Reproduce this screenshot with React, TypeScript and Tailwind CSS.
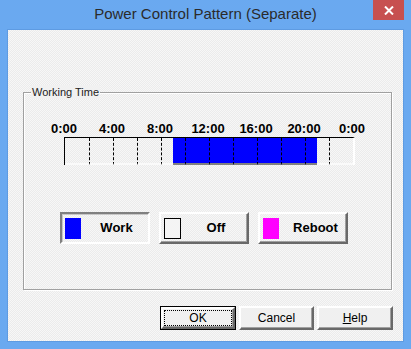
import React from "react";

const hours = Array.from({ length: 24 }, (_, h) => h);
const ticks = ["0:00", "4:00", "8:00", "12:00", "16:00", "20:00", "0:00"];

// working hours 9:00 - 21:00
const isWork = (h: number) => h >= 9 && h < 21;

export default function App() {
  return (
    <div className="relative flex h-[349px] w-[411px] flex-col bg-[#6aa9f0] font-['Liberation_Sans',Arial,sans-serif] text-black">
      {/* TITLE BAR */}
      <div className="flex h-[30px] items-center justify-center pb-[1px] text-[15px] text-[#2b2b2b]">
        Power Control Pattern (Separate)
      </div>
      <div className="absolute right-[7px] top-0 flex h-[20px] w-[31px] items-center justify-center bg-[#c75050]">
        <svg width="10" height="9" viewBox="0 0 10 9">
          <path d="M1 0.5 L9 8.5 M9 0.5 L1 8.5" stroke="#fff" strokeWidth="2" />
        </svg>
      </div>

      {/* CLIENT AREA */}
      <div className="mx-[8px] flex h-[311px] flex-col bg-[#f1f1f1] bg-[repeating-conic-gradient(#ebebeb_0_25%,#f7f7f7_0_50%)] bg-[length:2px_2px] shadow-[0_0_0_1px_#5e9be2]">
        {/* GROUP BOX */}
        <div className="relative ml-[15px] mt-[62px] flex h-[198px] w-[369px] flex-col border border-[#a0a0a0] shadow-[inset_1px_1px_0_#fff,1px_1px_0_#fff]">
          <span className="absolute left-[7px] top-[-8px] bg-[#f1f1f1] px-[1px] text-[11px] leading-[14px] text-[#222]">
            Working Time
          </span>

          {/* hour labels */}
          <div className="ml-[16px] mt-[28px] flex">
            {ticks.map((t, i) => (
              <span key={i} className="w-[48px] text-center text-[13px] font-bold leading-[15px]">
                {t}
              </span>
            ))}
          </div>

          {/* time bar */}
          <div className="ml-[40px] mt-[1px] flex h-[28px] w-[291px] border-l border-t border-black border-r-2 border-r-white">
            {hours.map((h) => (
              <div
                key={h}
                className={`h-full w-[12px] border-b-2 ${
                  isWork(h) ? "border-b-[#808080] bg-[#0000ff]" : "border-b-[#fafafa]"
                } ${h > 0 && h % 2 === 0 ? "border-l border-dashed border-l-black" : ""}`}
              />
            ))}
          </div>

          {/* legend */}
          <div className="ml-[36px] mt-[47px] flex gap-[9px]">
            <div className="flex h-[32px] w-[90px] items-center border-2 border-b-white border-l-[#808080] border-r-white border-t-[#808080] shadow-[inset_1px_1px_0_#c8c8c8]">
              <div className="ml-[3px] h-[21px] w-[16px] bg-[#0000ff]" />
              <span className="flex-1 pl-[4px] text-center text-[13px] font-bold">Work</span>
            </div>
            <div className="flex h-[32px] w-[90px] items-center border-2 border-b-[#696969] border-l-white border-r-[#696969] border-t-white shadow-[inset_-1px_-1px_0_#a0a0a0]">
              <div className="ml-[3px] h-[21px] w-[17px] border border-black bg-[#f4f4f4]" />
              <span className="flex-1 pl-[4px] text-center text-[13px] font-bold">Off</span>
            </div>
            <div className="flex h-[32px] w-[90px] items-center border-2 border-b-[#696969] border-l-white border-r-[#696969] border-t-white shadow-[inset_-1px_-1px_0_#a0a0a0]">
              <div className="ml-[3px] h-[21px] w-[16px] bg-[#ff00ff]" />
              <span className="flex-1 pl-[6px] text-center text-[13px] font-bold">Reboot</span>
            </div>
          </div>
        </div>

        {/* BUTTONS */}
        <div className="mr-[10px] mt-[16px] flex justify-end gap-[3px] text-[12px]">
          <button className="h-[24px] w-[76px] border border-black bg-[#f0f0f0] p-0">
            <div className="flex h-full w-full items-center justify-center border-2 border-b-[#696969] border-l-white border-r-[#696969] border-t-white p-[1px] shadow-[inset_-1px_-1px_0_#a0a0a0]">
              <div className="flex h-full w-full items-center justify-center border border-dotted border-black">
                OK
              </div>
            </div>
          </button>
          <button className="flex h-[24px] w-[75px] items-center justify-center border-2 border-b-[#696969] border-l-white border-r-[#696969] border-t-white bg-[#f0f0f0] shadow-[inset_-1px_-1px_0_#a0a0a0]">
            Cancel
          </button>
          <button className="flex h-[24px] w-[76px] items-center justify-center border-2 border-b-[#696969] border-l-white border-r-[#696969] border-t-white bg-[#f0f0f0] shadow-[inset_-1px_-1px_0_#a0a0a0]">
            <span className="underline">H</span>elp
          </button>
        </div>
      </div>
    </div>
  );
}
